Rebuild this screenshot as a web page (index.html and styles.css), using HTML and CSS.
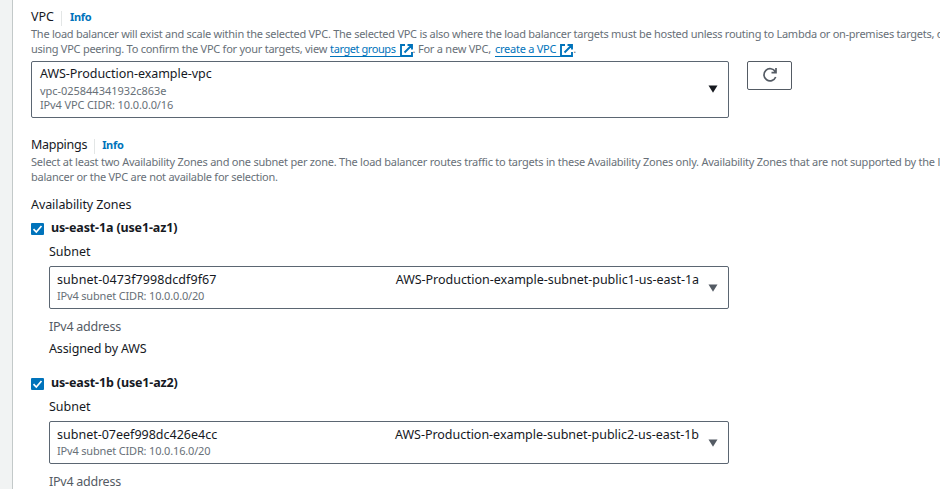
FILE: index.html
```html
<!DOCTYPE html>
<html lang="en">
<head>
<meta charset="utf-8">
<title>Network mapping</title>
<link rel="stylesheet" href="styles.css">
</head>
<body>
<main class="panel">
  <section class="vpc">
    <div class="heading"><span class="title t-vpc">VPC</span><a class="info">Info</a></div>
    <p class="desc d1">The load balancer will exist and scale within the selected VPC. The selected VPC is also where the load balancer targets must be hosted unless routing to Lambda or on-premises targets, or</p>
    <p class="desc d2"><span class="d2a">using VPC peering. To confirm the VPC for your targets, view</span><a class="link l1"><span>target groups</span><svg viewBox="0 0 13 13"><path d="M5 1H1v11h11V8M7.500 1H12v4.500M12 1L4.500 8.500"/></svg></a><span class="d2b">. For a new VPC,</span><a class="link l2"><span>create a VPC</span><svg viewBox="0 0 13 13"><path d="M5 1H1v11h11V8M7.500 1H12v4.500M12 1L4.500 8.500"/></svg></a><span>.</span></p>
    <div class="row">
      <div class="select vpc-select">
        <div class="options">
          <div class="name n-vpc">AWS-Production-example-vpc</div>
          <div class="meta m-id">vpc-025844341932c863e</div>
          <div class="meta m-cidr">IPv4 VPC CIDR: 10.0.0.0/16</div>
        </div>
        <svg class="caret dark" viewBox="0 0 10 8"><path d="M0.500 0.500h9L5 7.800z"/></svg>
      </div>
      <button class="refresh" aria-label="Refresh"><svg viewBox="0 0 16 16"><path d="M13.700 10A6.100 6.100 0 1 1 13.300 4.700L14 5.500M14 1v4.600H9.500"/></svg></button>
    </div>
  </section>

  <section class="mappings">
    <div class="heading"><span class="title t-map">Mappings</span><a class="info">Info</a></div>
    <p class="desc d3">Select at least two Availability Zones and one subnet per zone. The load balancer routes traffic to targets in these Availability Zones only. Availability Zones that are not supported by the load</p>
    <p class="desc d4">balancer or the VPC are not available for selection.</p>
    <div class="zones-title"><span class="title t-az">Availability Zones</span></div>

    <div class="zone">
      <div class="check"><span class="box"><svg viewBox="0 0 13 12"><path d="M2.500 6.200L5.300 9L10.500 3"/></svg></span><b>us-east-1a (use1-az1)</b></div>
      <div class="zone-body">
        <div class="label subnet">Subnet</div>
        <div class="select">
          <div class="options">
            <div class="name pair"><span class="s1">subnet-0473f7998dcdf9f67</span><span class="public">AWS-Production-example-subnet-public1-us-east-1a</span></div>
            <div class="meta cidr">IPv4 subnet CIDR: 10.0.0.0/20</div>
          </div>
          <svg class="caret" viewBox="0 0 10 8"><path d="M0.500 0.500h9L5 7.800z"/></svg>
        </div>
        <div class="label ip">IPv4 address</div>
        <div class="label assigned">Assigned by AWS</div>
      </div>
    </div>

    <div class="zone">
      <div class="check"><span class="box"><svg viewBox="0 0 13 12"><path d="M2.500 6.200L5.300 9L10.500 3"/></svg></span><b>us-east-1b (use1-az2)</b></div>
      <div class="zone-body">
        <div class="label subnet">Subnet</div>
        <div class="select">
          <div class="options">
            <div class="name pair"><span class="s2">subnet-07eef998dc426e4cc</span><span class="public">AWS-Production-example-subnet-public2-us-east-1b</span></div>
            <div class="meta cidr">IPv4 subnet CIDR: 10.0.16.0/20</div>
          </div>
          <svg class="caret" viewBox="0 0 10 8"><path d="M0.500 0.500h9L5 7.800z"/></svg>
        </div>
        <div class="label ip">IPv4 address</div>
      </div>
    </div>
  </section>
</main>
</body>
</html>
```

FILE: styles.css
```css
* { box-sizing: border-box; }
body {
  margin: 0;
  height: 489px;
  overflow: hidden;
  background: #f1f3f3;
  font-family: "Noto Sans", "Open Sans", sans-serif;
  font-size: 13px;
  color: #16191f;
  white-space: nowrap;
}
.panel {
  margin-left: 12px;
  height: 489px;
  padding: 7px 0 0 18px;
  overflow: hidden;
  background: #fff;
  border-left: 1px solid #c3c9c9;
}
.heading { display: flex; height: 20px; line-height: 20px; }
.title { font-size: 12.5px; }
.t-vpc { margin-right: 1px; }
.t-map { margin-right: 1px; letter-spacing: -0.28px; }
.t-az { letter-spacing: -0.08px; }
.info {
  margin: 4px 0 0 6px;
  height: 15px;
  padding-left: 8px;
  border-left: 1px solid #e3e6e6;
  line-height: 12px;
  font-size: 11px;
  font-weight: 700;
  letter-spacing: -0.3px;
  color: #0073bb;
}
.mappings .info { padding-left: 7px; }
.desc { display: flex; margin: 0; height: 15px; line-height: 13px; font-size: 11px; color: #687078; letter-spacing: -0.25px; }
.d1 { letter-spacing: -0.263px; }
.d3 { letter-spacing: -0.234px; }
.link { display: flex; height: 15px; margin-left: 3px; color: #0073bb; }
.link span { height: 15px; padding-right: 4px; border-bottom: 1px solid #0073bb; }
.l1 { letter-spacing: -0.42px; }
.l2 { margin-left: 4px; }
.d2b { letter-spacing: -0.23px; }
.link svg { width: 13px; height: 13px; margin-top: 2px; fill: none; stroke: #0073bb; stroke-width: 1.900; }
.row { display: flex; align-items: flex-start; gap: 18px; margin-top: 4px; }
.select {
  display: flex;
  align-items: center;
  width: 680px;
  height: 43px;
  padding: 0 10px 0 7px;
  border: 1px solid #5b6672;
  border-radius: 2px;
}
.vpc-select { width: 698px; height: 57px; padding-left: 8px; }
.vpc-select .options { padding-bottom: 2px; }
.options { flex: 1; }
.name { height: 17px; line-height: 16px; font-size: 12.5px; }
.n-vpc { line-height: 18px; letter-spacing: -0.04px; }
.s1 { letter-spacing: 0.08px; }
.public { letter-spacing: -0.025px; }
.pair { display: flex; justify-content: space-between; padding-right: 9px; }
.meta { height: 14px; line-height: 14px; font-size: 11px; color: #687078; }
.m-id { margin-top: 2px; letter-spacing: -0.03px; }
.m-cidr { letter-spacing: -0.13px; }
.cidr { letter-spacing: -0.17px; }
.caret { width: 10px; height: 8px; fill: #545b64; }
.caret.dark { fill: #16191f; margin-bottom: 1px; }
.refresh {
  display: flex;
  align-items: center;
  justify-content: center;
  width: 45px;
  height: 29px;
  padding: 0 0 1px 0;
  background: #fff;
  border: 1px solid #545b64;
  border-radius: 2px;
}
.refresh svg { width: 16px; height: 16px; fill: none; stroke: #545b64; stroke-width: 1.700; }
.mappings { margin-top: 17px; }
.zones-title { height: 20px; line-height: 18px; margin: 10px 0 3px; }
.zone { height: 155px; }
.check { display: flex; align-items: center; gap: 7px; height: 22px; font-size: 12.5px; }
.check b { line-height: 20px; margin-bottom: 2px; letter-spacing: -0.14px; }
.box { width: 13px; height: 12px; background: #0073bb; border-radius: 1px; }
.box svg { display: block; width: 13px; height: 12px; fill: none; stroke: #fff; stroke-width: 1.700; }
.zone-body { padding-left: 18px; }
.label { height: 22px; line-height: 22px; font-size: 12.5px; }
.subnet { height: 26px; line-height: 24px; }
.ip { margin-top: 7px; color: #545b64; letter-spacing: -0.25px; }
.assigned { letter-spacing: -0.14px; }
```
